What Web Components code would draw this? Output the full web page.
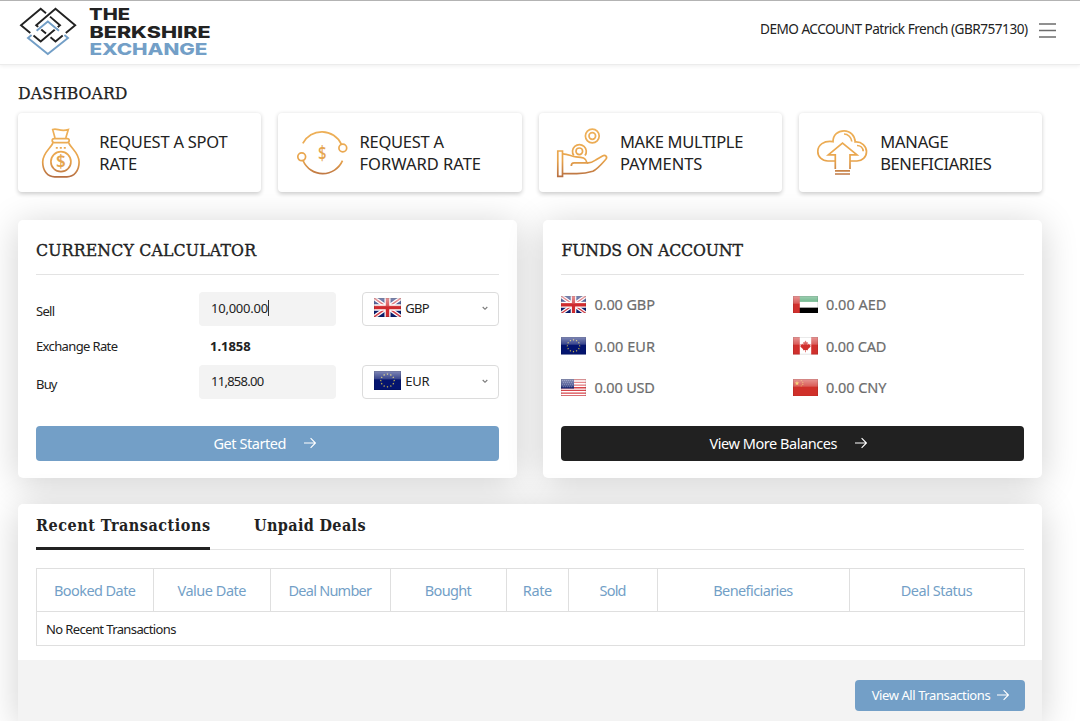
<!DOCTYPE html>
<html lang="en">
<head>
<meta charset="utf-8">
<title>Dashboard</title>
<style>
    * {
        box-sizing: border-box;
    }
    body {
        margin: 0;
        width: 1080px;
        height: 721px;
        overflow: hidden;
        background: #fff;
        color: #222;
        font-family: "Noto Sans", "Open Sans", sans-serif;
        font-size: 13px;
        --blue: #739fc7;
        --line: #e3e3e3;
        --slab: "Roboto Slab", "DejaVu Serif Condensed", "DejaVu Serif", serif;
        --lift: 0 5px 36px rgba(0, 0, 0, .19);
    }
    main {
        display: flex;
        flex-direction: column;
        width: 1060.4px;
        padding: 0 18px;
    }
    h1 {
        margin: 0;
        height: 48px;
        padding-top: 17px;
        font: 400 17.5px/23px var(--slab);
        -webkit-text-stroke: .25px;
    }
    .tiles {
        display: grid;
        grid-template-columns: repeat(4, 1fr);
        gap: 17px;
        height: 79px;
    }
    .panels {
        display: grid;
        grid-template-columns: 1fr 1fr;
        gap: 26.5px;
        margin-top: 28px;
        height: 258px;
    }
    deals-panel {
        margin-top: 26px;
    }
</style>
</head>
<body>
<app-header><fit-text width="268">DEMO ACCOUNT Patrick French (GBR757130)</fit-text></app-header>
<main>
    <h1><fit-text width="109.5">DASHBOARD</fit-text></h1>
    <div class="tiles">
        <action-tile icon="bag"><fit-text width="128.5">REQUEST A SPOT</fit-text><br><fit-text width="38">RATE</fit-text></action-tile>
        <action-tile icon="forward"><fit-text width="84.5">REQUEST A</fit-text><br><fit-text width="121.5">FORWARD RATE</fit-text></action-tile>
        <action-tile icon="hand"><fit-text width="123.5">MAKE MULTIPLE</fit-text><br><fit-text width="82.5">PAYMENTS</fit-text></action-tile>
        <action-tile icon="cloud"><fit-text width="68.5">MANAGE</fit-text><br><fit-text width="111.5">BENEFICIARIES</fit-text></action-tile>
    </div>
    <div class="panels">
        <dash-panel>
            <fit-text slot="title" width="220">CURRENCY CALCULATOR</fit-text>
            <currency-calculator></currency-calculator>
            <action-button slot="action"><fit-text width="73">Get Started</fit-text></action-button>
        </dash-panel>
        <dash-panel>
            <fit-text slot="title" width="181.5">FUNDS ON ACCOUNT</fit-text>
            <funds-list></funds-list>
            <action-button slot="action" dark><fit-text width="128">View More Balances</fit-text></action-button>
        </dash-panel>
    </div>
    <deals-panel></deals-panel>
</main>

<script>
const ICONS = {
    bag: `
        <path d="M19 10 16.7 1.6C21-.2 24 4 32.3 1.6L29.8 10"/>
        <rect x="16.2" y="10.6" width="17" height="4" rx="2"/>
        <path d="M17 15C14 21 6.7 25 6.7 34c0 9 5 14.8 12 14.8h12.2c7 0 12.2-5.8 12.2-14.8 0-9-7.4-13-10.4-19"/>
        <path d="M19.8 19.8h10" stroke-dasharray="2 2"/>
        <circle cx="24.9" cy="33.7" r="10"/>
        <text x="24.9" y="39.7" font-size="17" font-weight="600">$</text>`,
    forward: `
        <path d="M5.8 15.3A21.5 21.5 0 0 1 44.3 16.2M6 32.5a21.5 21.5 0 0 0 39.5.2"/>
        <circle cx="45.8" cy="20" r="3.9"/>
        <circle cx="4.7" cy="28.8" r="3.9"/>
        <text x="25.2" y="31.5" font-size="20" font-weight="500" textLength="8.5" lengthAdjust="spacingAndGlyphs">$</text>`,
    hand: `
        <path d="M.8 23h4.7v25.3H.8z"/>
        <circle cx="35.3" cy="8" r="6.9"/><circle cx="35.3" cy="8" r="3.3"/>
        <path d="M16.8 27.5a6.9 6.9 0 1 1 11.2 0"/><circle cx="22.3" cy="23.3" r="3.3"/>
        <path d="M5.5 25.8c6 0 9 2.7 13.5 3 6.5.3 10 1 11 6H17c-2 0-2.7 1-2.7 3.2"/>
        <path d="M30 34.8c4 .7 6-1 9.5-3.3l6-3.6c3-1.5 5.3 1 3.3 3.4-4 4.5-8 9.5-13 12-6 2-11 2.4-16 2.4H5.5"/>`,
    cloud: `
        <path d="M18 33h-7c-6 0-10.2-4.2-10.2-9.6 0-6.4 6-11 15.2-9.7C16 7 21 2.8 27 2.8c6.5 0 11 5 11.2 11.2 6.500-.5 11.3 4 11.3 9.7 0 5.3-4.5 9.3-9.5 9.3h-7"/>
        <path d="M27 6c4 0 7.5 3.5 7.8 7.5M40 17.5c3.5 0 6 2.5 6.2 5.8"/>
        <path d="M18.3 41V26.8h-7L25.5 15l14.5 11.8h-7V41M18 42.8h15M18 46h15"/>`
};

const star = (x, y, r) => {
    let p = [];
    for (let i = 0; i < 10; i++) {
        const a = Math.PI * i / 5, q = i % 2 ? r * 0.4 : r;
        p.push((x + q * Math.sin(a)).toFixed(2) + "," + (y - q * Math.cos(a)).toFixed(2));
    }
    return `<polygon points="${p.join(" ")}"/>`;
};

const ring = Array.from({length: 12}, (_, i) =>
    star(12.5 + 6.2 * Math.sin(i * Math.PI / 6), 8.5 - 5.7 * Math.cos(i * Math.PI / 6), 1)).join("");

const FLAGS = {
    GBP: `<path fill="#0a1c6b" d="M0 0h25v17H0z"/>
        <path stroke="#fff" stroke-width="3.6" d="M0 0 25 17M25 0 0 17"/>
        <path stroke="#d4404a" stroke-width="1.3" d="M0 0 25 17M25 0 0 17"/>
        <path stroke="#fff" stroke-width="5.6" d="M12.5 0v17M0 8.5h25"/>
        <path stroke="#cf2b2f" stroke-width="3.2" d="M12.5 0v17M0 8.5h25"/>`,
    EUR: `<path fill="#04146f" d="M0 0h25v17H0z"/><g fill="#e8cf4a">${ring}</g>`,
    USD: `<path fill="#fff" d="M0 0h25v17H0z"/>
        <path stroke="#d7444b" stroke-width="1.31" d="M0 .65h25M0 3.27h25M0 5.88h25M0 8.5h25M0 11.12h25M0 13.73h25M0 16.35h25"/>
        <path fill="#1d2a75" d="M0 0h13v9.3H0z"/>
        <path stroke="#9aa3cb" stroke-width=".6" stroke-dasharray=".8 1.2" d="M1 1.5h11M2 3.5h10M1 5.5h11M2 7.5h10"/>`,
    AED: `<path fill="#fff" d="M0 0h25v17H0z"/><path fill="#3fa067" d="M0 0h25v5.7H0z"/>
        <path fill="#000" d="M0 11.3h25V17H0z"/><path fill="#d0302d" d="M0 0h6.8v17H0z"/>`,
    CAD: `<path fill="#fff" d="M0 0h25v17H0z"/><path fill="#d0302d" d="M0 0h6.8v17H0zM18.2 0H25v17h-6.8z
        M12.5 3.3l1.3 2 1.1-.4-.4 2.7 1.5-1.2.3.9 1.5-.2-.6 1.6.6.5-3 2.6.2 1.1-2.2-.2v2h-.6v-2l-2.2.2.2-1.1-3-2.6.6-.5-.6-1.6 1.5.2.3-.9 1.5 1.2-.4-2.7 1.1.4z"/>`,
    CNY: `<path fill="#d0302a" d="M0 0h25v17H0z"/><g fill="#f5c33b">${star(4, 4.2, 2.5)}
        ${star(8.2, 1.6, .8)}${star(9.8, 3.2, .8)}${star(9.8, 5.2, .8)}${star(8.2, 6.8, .8)}</g>`
};

const ARROW = `<svg width="12" height="12" viewBox="0 0 12 12" fill="none" stroke="currentColor"
    stroke-width="1.1"><path d="M0 6h11.3M6.6 1.2 11.4 6l-4.8 4.8"/></svg>`;

class AppHeader extends HTMLElement {
    constructor() {
        super();
        this.attachShadow({mode: "open"}).innerHTML = `
            <style>
                :host {
                    box-sizing: border-box;
                    display: flex;
                    justify-content: space-between;
                    height: 65px;
                    padding-right: 24px;
                    border-top: 1px solid #b3b3b3;
                    border-bottom: 1px solid #ececec;
                    box-shadow: 0 1px 4px rgba(0, 0, 0, .07);
                    font-size: 13.6px;
                }
                .account {
                    display: flex;
                    align-items: center;
                    gap: 11px;
                    height: 55px;
                }
                .menu {
                    margin-top: 4px;
                }
            </style>
            <svg width="220" height="62" viewBox="0 1 220 62" fill="none" stroke-width="1.9">
                <path stroke="#739fc7" d="M31.6 35 28 38 47.8 54 68 38 64.4 35"/>
                <path stroke="#222" d="M30.300 33 21 25.200 40.700 8.800 46 13.200M50 16.600 60 25.200 40.700 41.500 33.500 35.500"/>
                <path stroke="#222" d="M65.800 33 75.200 25.200 55.500 8.800 36.200 25.200 46 33.500M50.500 37.200 55.500 41.500 62.700 35.500"/>
                <path stroke="#fff" stroke-width="4" d="M38.500 29.100 42 26.200M53.600 26.200 57 29.100"/>
                <path stroke="#739fc7" d="M36.600 30.800 47.800 21.500 59 30.800"/>
                <g font-family="Inter, sans-serif" font-weight="800" font-size="16.5" fill="#222">
                    <text x="89" y="20" textLength="41" lengthAdjust="spacingAndGlyphs">THE</text>
                    <text x="89.5" y="37.5" textLength="121" lengthAdjust="spacingAndGlyphs">BERKSHIRE</text>
                    <text x="89.5" y="55.2" fill="#739fc7" textLength="118" lengthAdjust="spacingAndGlyphs">EXCHANGE</text>
                </g>
            </svg>
            <div class="account">
                <slot></slot>
                <svg class="menu" width="17" height="15" viewBox="0 0 17 15" stroke="#6c6c6c" stroke-width="1.6">
                    <path d="M0 1h17M0 7.5h17M0 14h17"/>
                </svg>
            </div>`;
    }
}

class ActionTile extends HTMLElement {
    constructor() {
        super();
        this.attachShadow({mode: "open"}).innerHTML = `
            <style>
                :host {
                    display: flex;
                    align-items: center;
                    gap: 13px;
                    padding-left: 18.2px;
                    border-radius: 4px;
                    background: #fff;
                    box-shadow: 0 1.5px 4px rgba(0, 0, 0, .2);
                    font-size: 16.5px;
                    line-height: 22.5px;
                }
                svg {
                    flex: none;
                    overflow: visible;
                }
                div {
                    padding-top: 1px;
                }
                text {
                    fill: #e5a54f;
                    stroke: none;
                    text-anchor: middle;
                }
            </style>
            <svg width="50" height="50" viewBox="0 0 50 50" fill="none" stroke="url(#gold)" stroke-width="1.7">
                <linearGradient id="gold" gradientUnits="userSpaceOnUse" x1="0" y1="0" x2="0" y2="50">
                    <stop offset="0" stop-color="#eeb159"/>
                    <stop offset=".65" stop-color="#e8a44c"/>
                    <stop offset="1" stop-color="#b36b41"/>
                </linearGradient>
                ${ICONS[this.getAttribute("icon")]}
            </svg>
            <div><slot></slot></div>`;
    }
}

class DashPanel extends HTMLElement {
    constructor() {
        super();
        this.attachShadow({mode: "open"}).innerHTML = `
            <style>
                :host {
                    box-sizing: border-box;
                    display: flex;
                    flex-direction: column;
                    padding: 0 18px 17px;
                    border-radius: 5px;
                    background: #fff;
                    box-shadow: var(--lift);
                }
                h2 {
                    box-sizing: border-box;
                    height: 55px;
                    margin: 0;
                    padding-top: 19px;
                    border-bottom: 1px solid var(--line);
                    font: 400 17.5px/23px var(--slab);
                    -webkit-text-stroke: .35px;
                }
                .content {
                    flex: 1;
                }
            </style>
            <h2><slot name="title"></slot></h2>
            <div class="content"><slot></slot></div>
            <slot name="action"></slot>`;
    }
}

class ActionButton extends HTMLElement {
    constructor() {
        super();
        this.attachShadow({mode: "open"}).innerHTML = `
            <style>
                :host {
                    box-sizing: border-box;
                    display: flex;
                    align-items: center;
                    justify-content: center;
                    gap: 18px;
                    height: 35px;
                    padding: 0 5px 2px 0;
                    border-radius: 4px;
                    background: var(--blue);
                    color: #fff;
                    font-size: 14.5px;
                }
                :host([dark]) {
                    padding-right: 9px;
                    background: #212121;
                }
                :host([small]) {
                    gap: 6px;
                    width: 170.5px;
                    height: 31px;
                    padding-right: 0;
                    font-size: 13px;
                }
                svg {
                    margin-top: 1px;
                }
            </style>
            <slot></slot>${ARROW}`;
    }
}

class CurrencyFlag extends HTMLElement {
    constructor() {
        super();
        this.attachShadow({mode: "open"}).innerHTML = `
            <style>
                :host {
                    display: block;
                    width: 25px;
                    height: 17.5px;
                }
                svg {
                    display: block;
                    width: 100%;
                    height: 100%;
                }
            </style>
            <svg viewBox="0 0 25 17" preserveAspectRatio="none">
                <linearGradient id="gloss" x1="0" y1="0" x2="0" y2="1">
                    <stop offset="0" stop-color="#fff" stop-opacity=".5"/>
                    <stop offset="1" stop-color="#fff" stop-opacity=".2"/>
                </linearGradient>
                ${FLAGS[this.getAttribute("code")]}
                <path fill="url(#gloss)" d="M0 0h25v7.5H0z"/>
                <path fill="none" stroke="#000" stroke-opacity=".18" stroke-width=".6" d="M.3.3h24.4v16.4H.3z"/>
            </svg>`;
    }
}

class CurrencySelect extends HTMLElement {
    constructor() {
        super();
        const code = this.getAttribute("code");
        this.attachShadow({mode: "open"}).innerHTML = `
            <style>
                :host {
                    box-sizing: border-box;
                    display: flex;
                    align-items: center;
                    height: 34px;
                    padding: 0 10px 3px 11px;
                    border: 1px solid #dcdcdc;
                    border-radius: 4px;
                    background: #fff;
                }
                currency-flag {
                    width: 27px;
                    height: 19px;
                    margin-right: 4px;
                }
                .chevron {
                    margin: 2px 0 0 auto;
                }
            </style>
            <currency-flag code="${code}"></currency-flag>
            <fit-text width="24.5">${code}</fit-text>
            <svg class="chevron" width="6" height="5" viewBox="0 0 6 5" fill="none" stroke="#777" stroke-width="1.1"><path d="M.7 1 3 3.3 5.3 1"/></svg>`;
    }
}

class CurrencyCalculator extends HTMLElement {
    constructor() {
        super();
        this.attachShadow({mode: "open"}).innerHTML = `
            <style>
                :host {
                    display: grid;
                    grid-template-columns: 136.5px 136.5px 136.5px;
                    grid-template-rows: 34px 39px 34px;
                    column-gap: 26.6px;
                    align-items: center;
                    padding-top: 17px;
                    font-size: 13px;
                }
                .name {
                    padding-top: 3px;
                }
                .rate {
                    padding: 0 0 0 11px;
                    font-weight: 700;
                }
                .field {
                    box-sizing: border-box;
                    display: flex;
                    align-items: center;
                    height: 34px;
                    padding: 0 0 2px 12px;
                    border-radius: 4px;
                    background: #f3f3f3;
                }
                .caret {
                    width: 1px;
                    height: 16px;
                    background: #333;
                }
            </style>
            <div class="name"><fit-text width="19">Sell</fit-text></div>
            <div class="field"><fit-text width="57">10,000.00</fit-text><span class="caret"></span></div>
            <currency-select code="GBP"></currency-select>
            <div><fit-text width="82">Exchange Rate</fit-text></div>
            <div class="rate"><fit-text width="40.5">1.1858</fit-text></div>
            <div></div>
            <div class="name"><fit-text width="21.5">Buy</fit-text></div>
            <div class="field"><fit-text width="53">11,858.00</fit-text></div>
            <currency-select code="EUR"></currency-select>`;
    }
}

class FundsList extends HTMLElement {
    constructor() {
        super();
        const codes = ["GBP", "AED", "EUR", "CAD", "USD", "CNY"];
        this.attachShadow({mode: "open"}).innerHTML = `
            <style>
                :host {
                    display: grid;
                    grid-template-columns: 1fr 1fr;
                    grid-auto-rows: 41.6px;
                    padding-top: 8.7px;
                    color: #6d6d6d;
                    font-size: 14.5px;
                }
                div {
                    display: flex;
                    align-items: center;
                    gap: 8px;
                }
                fit-text {
                    margin-top: -1px;
                    -webkit-text-stroke: .2px;
                }
            </style>
            ${codes.map(c => `<div><currency-flag code="${c}"></currency-flag><fit-text width="60.5">0.00 ${c}</fit-text></div>`).join("")}`;
    }
}

class DealsPanel extends HTMLElement {
    constructor() {
        super();
        const columns = [["Booked Date", 82, 117], ["Value Date", 69, 117], ["Deal Number", 83.5, 119.5],
            ["Bought", 47, 116.5], ["Rate", 29.5, 62], ["Sold", 27, 89], ["Beneficiaries", 80, 191.5], ["Deal Status", 72, 175.5]];
        this.attachShadow({mode: "open"}).innerHTML = `
            <style>
                :host {
                    display: block;
                    height: 217px;
                    border-radius: 5px 5px 0 0;
                    background: #fff;
                    box-shadow: var(--lift);
                }
                .body {
                    box-sizing: border-box;
                    height: 156px;
                    padding: 0 18px;
                }
                nav {
                    display: flex;
                    gap: 44px;
                    box-sizing: border-box;
                    height: 46px;
                    border-bottom: 1px solid var(--line);
                    font: 700 16px/20px var(--slab);
                }
                nav div {
                    box-sizing: border-box;
                    height: 46px;
                    padding-top: 12px;
                }
                nav .active {
                    border-bottom: 3px solid #222;
                }
                table {
                    width: 988px;
                    margin-top: 17.5px;
                    border-collapse: collapse;
                    table-layout: fixed;
                    font-size: 13px;
                }
                th, td {
                    box-sizing: border-box;
                    padding: 0;
                    border: 1px solid #dfdfdf;
                }
                th {
                    height: 43.5px;
                    color: var(--blue);
                    font-size: 14.5px;
                    font-weight: 400;
                }
                td {
                    height: 34px;
                    padding: 1px 0 0 9px;
                }
                footer {
                    display: flex;
                    justify-content: flex-end;
                    height: 61px;
                    box-sizing: border-box;
                    padding: 20px 17px 0;
                    background: #f3f3f3;
                }
            </style>
            <div class="body">
                <nav>
                    <div class="active"><fit-text width="174">Recent Transactions</fit-text></div>
                    <div><fit-text width="111.5">Unpaid Deals</fit-text></div>
                </nav>
                <table>
                    <colgroup>${columns.map(([, , col]) => `<col style="width:${col}px">`).join("")}</colgroup>
                    <tr>${columns.map(([name, w]) => `<th><fit-text width="${w}">${name}</fit-text></th>`).join("")}</tr>
                    <tr><td colspan="8"><fit-text width="130.5">No Recent Transactions</fit-text></td></tr>
                </table>
            </div>
            <footer><action-button small><fit-text width="119">View All Transactions</fit-text></action-button></footer>`;
    }
}

// Tracks its text so that the line takes the given width.
class FitText extends HTMLElement {
    constructor() {
        super();
        this.attachShadow({mode: "open"}).innerHTML = `
            <style>
                :host {
                    display: inline-block;
                    white-space: nowrap;
                }
            </style><slot></slot>`;
    }

    connectedCallback() {
        const gaps = this.textContent.length - 1;
        const space = (this.getAttribute("width") - this.getBoundingClientRect().width) / gaps;
        this.style.letterSpacing = space + "px";
        this.style.marginRight = -space + "px";
    }
}

customElements.define("app-header", AppHeader);
customElements.define("action-tile", ActionTile);
customElements.define("dash-panel", DashPanel);
customElements.define("action-button", ActionButton);
customElements.define("currency-flag", CurrencyFlag);
customElements.define("currency-select", CurrencySelect);
customElements.define("currency-calculator", CurrencyCalculator);
customElements.define("funds-list", FundsList);
customElements.define("deals-panel", DealsPanel);
customElements.define("fit-text", FitText);
</script>
</body>
</html>
